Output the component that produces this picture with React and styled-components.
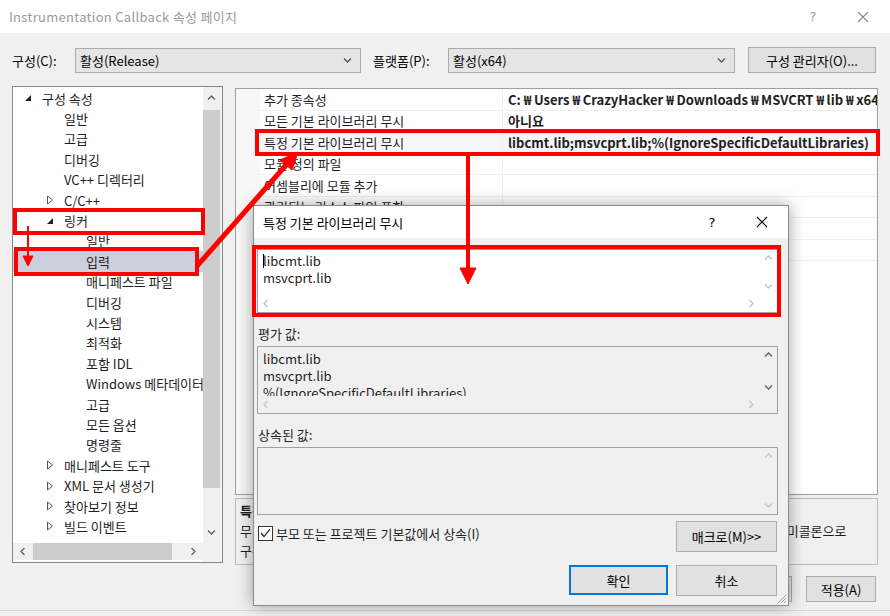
import React from 'react';
import styled, { createGlobalStyle } from 'styled-components';

// 속성 페이지 + "특정 기본 라이브러리 무시" 대화상자

const GlobalStyle = createGlobalStyle`
  html, body { margin: 0; padding: 0; background: #f0f0f0; overflow: hidden; }
  body {
    font-family: "Noto Sans CJK KR", "Noto Sans", sans-serif;
    font-size: 13px;
    color: #000;
  }
  * { box-sizing: border-box; }
`;

const Window = styled.div`
  position: relative;
  width: 890px;
  height: 616px;
  background: #f0f0f0;
  overflow: hidden;
`;

const TitleBar = styled.div`
  height: ${(p) => p.$h || 33}px;
  background: #fff;
  display: flex;
  align-items: center;
  padding-left: 9px;
  padding-right: ${(p) => p.$pr || 2}px;
  color: ${(p) => (p.$active ? '#000' : '#9a9a9a')};
  flex-shrink: 0;
`;

const TitleText = styled.div`
  flex: 1;
  font-size: 13px;
  white-space: nowrap;
  letter-spacing: ${(p) => p.$ls || 0}px;
`;

const CapButton = styled.div`
  width: 50px;
  height: 100%;
  display: flex;
  align-items: center;
  justify-content: center;
  font-family: "DejaVu Sans", sans-serif;
  font-size: 13px;
`;

const Body = styled.div`
  height: 578px;
  padding: 14px 12px 0 12px;
  border-bottom: 1px solid #d9d9d9;
`;

const ConfigRow = styled.div`
  height: 26px;
  display: flex;
  align-items: center;
`;

const FieldLabel = styled.div`
  width: ${(p) => p.$w}px;
  padding-left: ${(p) => p.$pl || 0}px;
  flex-shrink: 0;
  white-space: nowrap;
`;

const Select = styled.div`
  width: ${(p) => p.$w}px;
  height: 25px;
  margin-top: 1px;
  background: #e5e5e5;
  border: 1px solid #acacac;
  display: flex;
  align-items: center;
  padding: 0 8px 0 4px;
  flex-shrink: 0;
`;

const SelectText = styled.div`
  flex: 1;
  white-space: nowrap;
`;

const Button = styled.div`
  width: ${(p) => p.$w}px;
  height: ${(p) => p.$h || 26}px;
  margin-left: ${(p) => p.$ml || 0}px;
  background: #e1e1e1;
  border: 1px solid ${(p) => (p.$default ? '#0078d7' : '#adadad')};
  box-shadow: ${(p) => (p.$default ? 'inset 0 0 0 1px #0078d7' : 'none')};
  display: flex;
  align-items: center;
  justify-content: center;
  white-space: nowrap;
  flex-shrink: 0;
  color: #000;
`;

const Main = styled.div`
  margin-top: 13px;
  height: 479px;
  display: flex;
  gap: 12px;
`;

/* ---------- tree ---------- */

const TreePanel = styled.div`
  width: 211px;
  height: 477px;
  flex-shrink: 0;
  border: 1px solid #828790;
  background: #fff;
  display: grid;
  grid-template-columns: 190px 19px;
  grid-template-rows: 456px 19px;
`;

const TreeContent = styled.div`
  overflow: hidden;
  padding-top: 1px;
`;

const TreeRow = styled.div`
  height: 20.4px;
  display: flex;
  align-items: center;
  padding-left: ${(p) => 8 + p.$level * 22}px;
  background: ${(p) => (p.$selected ? '#cccedb' : 'transparent')};
  color: #1e1e1e;
  white-space: nowrap;
`;

const Expander = styled.span`
  width: 14px;
  height: 14px;
  margin-right: 7px;
  display: flex;
  align-items: center;
  justify-content: center;
  flex-shrink: 0;
`;

const VScroll = styled.div`
  background: #f0f0f0;
  display: flex;
  flex-direction: column;
`;

const HScroll = styled.div`
  background: #f0f0f0;
  display: flex;
  height: 17px;
`;

const ScrollBtn = styled.div`
  width: ${(p) => p.$w || 17}px;
  height: ${(p) => p.$h || 17}px;
  display: flex;
  align-items: center;
  justify-content: center;
  flex-shrink: 0;
`;

const VTrack = styled.div`
  flex: 1;
  padding-top: 1px;
`;

const VThumb = styled.div`
  width: 17px;
  height: 378px;
  background: #cdcdcd;
`;

const HTrack = styled.div`
  flex: 1;
  display: flex;
  align-items: center;
`;

const HThumb = styled.div`
  width: 139px;
  height: 17px;
  background: #cdcdcd;
`;

const Corner = styled.div`
  background: #f0f0f0;
`;

/* ---------- property grid ---------- */

const RightCol = styled.div`
  flex: 1;
  min-width: 0;
  margin-top: 2px;
  display: flex;
  flex-direction: column;
  gap: 3px;
`;

const Grid = styled.div`
  height: 407px;
  border: 1px solid #a0a0a0;
  background: #fff;
  display: flex;
  overflow: hidden;
`;

const Gutter = styled.div`
  width: 24px;
  background: #f7f7f7;
  flex-shrink: 0;
`;

const GridRows = styled.div`
  flex: 1;
  min-width: 0;
  overflow: hidden;
`;

const PropRow = styled.div`
  height: 21.5px;
  display: flex;
  border-bottom: 1px solid #eef0f3;
  background: ${(p) => (p.$current ? '#f4f6fa' : '#fff')};
`;

const PropName = styled.div`
  width: 243px;
  flex-shrink: 0;
  padding-left: 4px;
  border-right: 1px solid #eef0f3;
  display: flex;
  align-items: center;
  white-space: nowrap;
  color: #1e1e1e;
`;

const PropValue = styled.div`
  flex: 1;
  min-width: 0;
  padding-left: 5px;
  display: flex;
  align-items: center;
  white-space: pre;
  overflow: hidden;
  font-weight: ${(p) => (p.$bold ? 700 : 400)};
  color: #1e1e1e;
`;

// 한글 글꼴의 원(₩) 기호는 경로 구분자로 넓게 그려짐
const Won = styled.span`
  padding: 0 2.5px 0 3px;
`;

const Desc = styled.div`
  height: 67px;
  border: 1px solid #bcbcbc;
  background: #f0f0f0;
  padding: 2px 4px;
  overflow: hidden;
`;

const DescLine = styled.div`
  height: 20px;
  line-height: 20px;
  white-space: nowrap;
  font-weight: ${(p) => (p.$bold ? 700 : 400)};
  color: #1e1e1e;
`;

const Footer = styled.div`
  margin-top: 11px;
  display: flex;
  justify-content: flex-end;
  gap: 14px;
  padding-right: 2px;
`;

/* ---------- dialog ---------- */

const Dialog = styled.div`
  position: absolute;
  left: 253px;
  top: 205px;
  width: 536px;
  height: 401px;
  border: 1px solid #8a8a8a;
  background: #f0f0f0;
  box-shadow: 0 0 16px rgba(0, 0, 0, 0.35);
  display: flex;
  flex-direction: column;
`;

const DialogBody = styled.div`
  flex: 1;
  padding: 11px 10px 0 3px;
  display: flex;
  flex-direction: column;
`;

const EditBox = styled.div`
  height: ${(p) => p.$h}px;
  border: 1px solid #a0a0a0;
  background: ${(p) => (p.$readonly ? '#f0f0f0' : '#fff')};
  display: grid;
  grid-template-columns: 1fr 17px;
  grid-template-rows: ${(p) => (p.$hscroll ? '1fr 17px' : '1fr')};
  flex-shrink: 0;
`;

const EditText = styled.div`
  padding: ${(p) => p.$pt || 2}px 0 0 5px;
  overflow: hidden;
  color: #1e1e1e;
`;

const EditLine = styled.div`
  height: 17px;
  line-height: 17px;
  white-space: nowrap;
  display: flex;
  align-items: center;
`;

const Caret = styled.span`
  display: inline-block;
  width: 1px;
  height: 14px;
  background: #000;
  margin-right: -1px;
`;

const EditVScroll = styled.div`
  display: flex;
  flex-direction: column;
  justify-content: space-between;
`;

const EditHScroll = styled.div`
  display: flex;
  justify-content: space-between;
`;

const DlgLabel = styled.div`
  height: 17px;
  line-height: 17px;
  margin: 12px 0 4px 1px;
  color: #1e1e1e;
`;

const CheckRow = styled.div`
  margin-top: 6px;
  display: flex;
  align-items: flex-start;
  justify-content: space-between;
  padding-right: 1px;
`;

const CheckLabel = styled.label`
  margin-top: 4px;
  margin-left: 1px;
  display: flex;
  align-items: center;
  gap: 3px;
  height: 16px;
  color: #1e1e1e;
`;

const CheckBox = styled.span`
  width: 15px;
  height: 15px;
  border: 1px solid #333;
  background: #fff;
  display: flex;
  align-items: center;
  justify-content: center;
`;

const DlgButtons = styled.div`
  margin-top: 13px;
  display: flex;
  justify-content: flex-end;
  gap: 8px;
  padding-right: 1px;
`;

const Grip = styled.svg`
  position: absolute;
  right: 1px;
  bottom: 1px;
`;

const Overlay = styled.svg`
  position: absolute;
  left: 0;
  top: 0;
  pointer-events: none;
`;

/* ---------- small drawings ---------- */

const Chevron = ({ dir, color = '#606060', size = 8 }) => {
  const pts = {
    up: '1,5.5 4.5,2 8,5.5',
    down: '1,2.5 4.5,6 8,2.5',
    left: '5.5,1 2,4.5 5.5,8',
    right: '2.5,1 6,4.5 2.5,8',
  }[dir];
  return (
    <svg width={size + 1} height={size + 1} viewBox="0 0 9 9">
      <polyline points={pts} fill="none" stroke={color} strokeWidth="1.3" />
    </svg>
  );
};

const CloseGlyph = ({ color }) => (
  <svg width="12" height="12" viewBox="0 0 12 12">
    <path d="M1 1 L11 11 M11 1 L1 11" stroke={color} strokeWidth="1.1" />
  </svg>
);

const ExpandGlyph = ({ open }) =>
  open ? (
    <svg width="8" height="8" viewBox="0 0 8 8">
      <polygon points="7,1 7,7 1,7" fill="#1e1e1e" />
    </svg>
  ) : (
    <svg width="8" height="10" viewBox="0 0 8 10">
      <polygon points="1.5,1 6.5,5 1.5,9" fill="#fff" stroke="#555" strokeWidth="1" />
    </svg>
  );

const PathText = ({ text }) =>
  text.split('₩').map((part, i) => (
    <React.Fragment key={i}>
      {i > 0 && <Won>₩</Won>}
      {part}
    </React.Fragment>
  ));

const treeItems = [
  { label: '구성 속성', level: 0, exp: 'open' },
  { label: '일반', level: 1 },
  { label: '고급', level: 1 },
  { label: '디버깅', level: 1 },
  { label: 'VC++ 디렉터리', level: 1 },
  { label: 'C/C++', level: 1, exp: 'closed' },
  { label: '링커', level: 1, exp: 'open' },
  { label: '일반', level: 2 },
  { label: '입력', level: 2, selected: true },
  { label: '매니페스트 파일', level: 2 },
  { label: '디버깅', level: 2 },
  { label: '시스템', level: 2 },
  { label: '최적화', level: 2 },
  { label: '포함 IDL', level: 2 },
  { label: 'Windows 메타데이터', level: 2 },
  { label: '고급', level: 2 },
  { label: '모든 옵션', level: 2 },
  { label: '명령줄', level: 2 },
  { label: '매니페스트 도구', level: 1, exp: 'closed' },
  { label: 'XML 문서 생성기', level: 1, exp: 'closed' },
  { label: '찾아보기 정보', level: 1, exp: 'closed' },
  { label: '빌드 이벤트', level: 1, exp: 'closed' },
];

const props = [
  { name: '추가 종속성', value: 'C:₩Users₩CrazyHacker₩Downloads₩MSVCRT₩lib₩x64₩libcmt.lib;%(AdditionalDependencies)', bold: true },
  { name: '모든 기본 라이브러리 무시', value: '아니요', bold: true },
  { name: '특정 기본 라이브러리 무시', value: 'libcmt.lib;msvcprt.lib;%(IgnoreSpecificDefaultLibraries)', bold: true, current: true },
  { name: '모듈 정의 파일', value: '' },
  { name: '어셈블리에 모듈 추가', value: '' },
  { name: '관리되는 리소스 파일 포함', value: '' },
  { name: '심볼 참조 강제 적용', value: '' },
  { name: '지연 로드된 DLL', value: '' },
];

const Tree = () => (
  <TreePanel>
    <TreeContent>
      {treeItems.map((it, i) => (
        <TreeRow key={i} $level={it.level} $selected={it.selected}>
          <Expander>{it.exp && <ExpandGlyph open={it.exp === 'open'} />}</Expander>
          {it.label}
        </TreeRow>
      ))}
    </TreeContent>
    <VScroll>
      <ScrollBtn $h={22}><Chevron dir="up" /></ScrollBtn>
      <VTrack><VThumb /></VTrack>
      <ScrollBtn $h={22}><Chevron dir="down" /></ScrollBtn>
    </VScroll>
    <HScroll>
      <ScrollBtn $w={20}><Chevron dir="left" /></ScrollBtn>
      <HTrack><HThumb /></HTrack>
      <ScrollBtn $w={20}><Chevron dir="right" /></ScrollBtn>
    </HScroll>
    <Corner />
  </TreePanel>
);

const PropertyGrid = () => (
  <Grid>
    <Gutter />
    <GridRows>
      {props.map((p, i) => (
        <PropRow key={i} $current={p.current}>
          <PropName>{p.name}</PropName>
          <PropValue $bold={p.bold}>
            <PathText text={p.value} />
          </PropValue>
        </PropRow>
      ))}
    </GridRows>
  </Grid>
);

const Edit = ({ lines, h, readonly, hscroll, disabled, caret, pt }) => {
  const c = disabled ? '#c4c4c4' : '#606060';
  return (
    <EditBox $h={h} $readonly={readonly} $hscroll={hscroll}>
      <EditText $pt={pt}>
        {lines.map((l, i) => (
          <EditLine key={i}>
            {caret && i === 0 && <Caret />}
            {l}
          </EditLine>
        ))}
      </EditText>
      <EditVScroll>
        <ScrollBtn><Chevron dir="up" color={c} /></ScrollBtn>
        <ScrollBtn><Chevron dir="down" color={c} /></ScrollBtn>
      </EditVScroll>
      {hscroll && (
        <>
          <EditHScroll>
            <ScrollBtn><Chevron dir="left" color="#c4c4c4" /></ScrollBtn>
            <ScrollBtn><Chevron dir="right" color="#c4c4c4" /></ScrollBtn>
          </EditHScroll>
          <div />
        </>
      )}
    </EditBox>
  );
};

const IgnoreLibDialog = () => (
  <Dialog>
    <TitleBar $active $h={32} $pr={1}>
      <TitleText>특정 기본 라이브러리 무시</TitleText>
      <CapButton>?</CapButton>
      <CapButton><CloseGlyph color="#000" /></CapButton>
    </TitleBar>
    <DialogBody>
      <Edit lines={['libcmt.lib', 'msvcprt.lib']} h={64} hscroll disabled caret pt={2} />
      <DlgLabel>평가 값:</DlgLabel>
      <Edit
        lines={['libcmt.lib', 'msvcprt.lib', '%(IgnoreSpecificDefaultLibraries)']}
        h={68}
        readonly
        hscroll
        pt={3}
      />
      <DlgLabel>상속된 값:</DlgLabel>
      <Edit lines={[]} h={68} readonly disabled />
      <CheckRow>
        <CheckLabel>
          <CheckBox>
            <svg width="11" height="10" viewBox="0 0 11 10">
              <polyline points="1,5 4,8.5 10,1" fill="none" stroke="#222" strokeWidth="1.2" />
            </svg>
          </CheckBox>
          부모 또는 프로젝트 기본값에서 상속(I)
        </CheckLabel>
        <Button $w={101} $h={31}>매크로(M)&gt;&gt;</Button>
      </CheckRow>
      <DlgButtons>
        <Button $w={99} $h={30} $default>확인</Button>
        <Button $w={101} $h={31}>취소</Button>
      </DlgButtons>
    </DialogBody>
    <Grip width="11" height="11" viewBox="0 0 11 11">
      <path d="M10 2 L2 10 M10 5 L5 10 M10 8 L8 10" stroke="#a8a8a8" strokeWidth="1" />
    </Grip>
  </Dialog>
);

const Annotations = () => (
  <Overlay width="890" height="616" viewBox="0 0 890 616">
    <g fill="none" stroke="#ff0000" strokeWidth="4">
      <rect x="257" y="131" width="621" height="23" />
      <rect x="15" y="210" width="188" height="23" />
      <rect x="16" y="249" width="181" height="25" />
      <rect x="254" y="247" width="525" height="68" />
    </g>
    <g stroke="#ff0000" fill="#ff0000">
      <line x1="197" y1="266" x2="287" y2="164" strokeWidth="5" />
      <polygon points="298,152 292,170 280,160" />
      <line x1="468" y1="156" x2="468" y2="270" strokeWidth="4" />
      <polygon points="460,268 476,268 468,284" />
      <line x1="28" y1="226" x2="28" y2="258" strokeWidth="2" />
      <polygon points="23,256 33,256 28,266" />
    </g>
  </Overlay>
);

const App = () => (
  <Window>
    <GlobalStyle />
    <TitleBar>
      <TitleText $ls={0.3}>Instrumentation Callback 속성 페이지</TitleText>
      <CapButton>?</CapButton>
      <CapButton><CloseGlyph color="#8a8a8a" /></CapButton>
    </TitleBar>
    <Body>
      <ConfigRow>
        <FieldLabel $w={63}>구성(C):</FieldLabel>
        <Select $w={286}>
          <SelectText>활성(Release)</SelectText>
          <Chevron dir="down" color="#555" />
        </Select>
        <FieldLabel $w={87} $pl={12}>플랫폼(P):</FieldLabel>
        <Select $w={287}>
          <SelectText>활성(x64)</SelectText>
          <Chevron dir="down" color="#555" />
        </Select>
        <Button $w={128} $ml={13}>구성 관리자(O)...</Button>
      </ConfigRow>
      <Main>
        <Tree />
        <RightCol>
          <PropertyGrid />
          <Desc>
            <DescLine $bold>특정 기본 라이브러리 무시</DescLine>
            <DescLine>무시할 기본 라이브러리 이름을 하나 이상 지정합니다. 외부 참조를 확인할 때 여러 라이브러리 이름은 세미콜론으로</DescLine>
            <DescLine>구분합니다. (/NODEFAULTLIB:[name,name,...])</DescLine>
          </Desc>
        </RightCol>
      </Main>
      <Footer>
        <Button $w={70}>확인</Button>
        <Button $w={70}>취소</Button>
        <Button $w={70}>적용(A)</Button>
      </Footer>
    </Body>
    <IgnoreLibDialog />
    <Annotations />
  </Window>
);

export default App;
